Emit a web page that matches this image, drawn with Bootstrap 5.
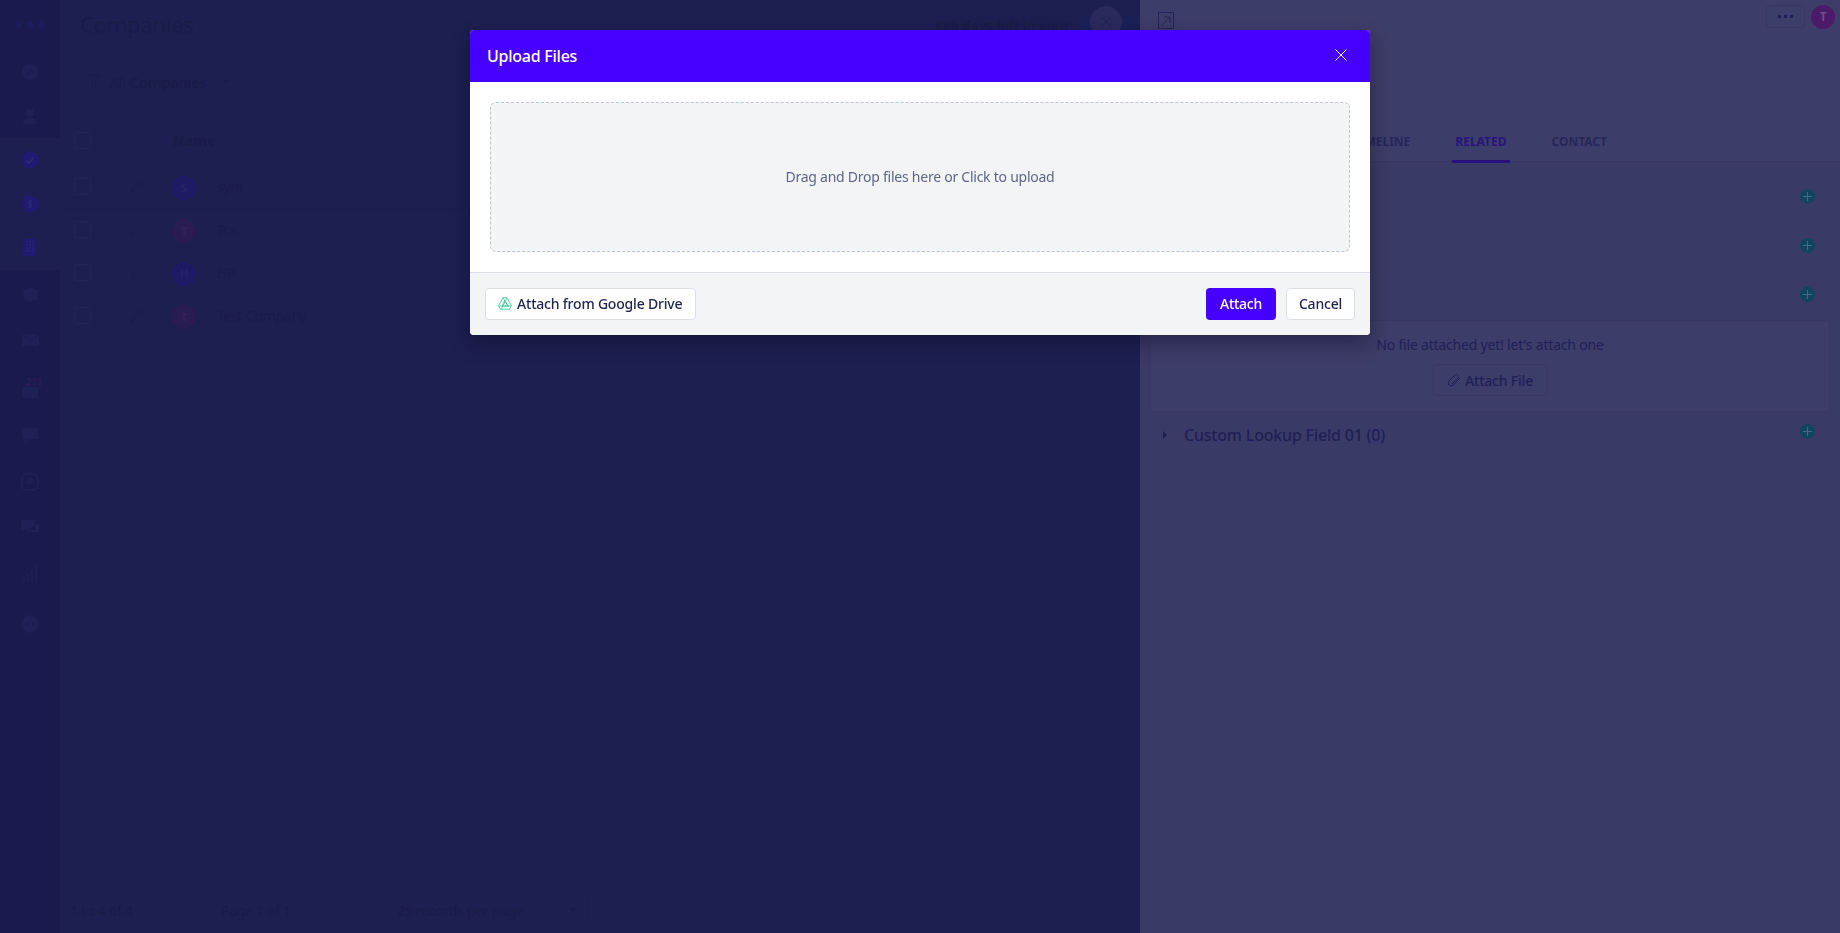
<!DOCTYPE html>
<html lang="en">
<head>
<meta charset="UTF-8">
<title>Upload Files</title>
<link href="https://cdn.jsdelivr.net/npm/bootstrap@5.3.0/dist/css/bootstrap.min.css" rel="stylesheet">
<style>
    body { font-family: "Noto Sans", sans-serif; background: #1d1f50; overflow: hidden; font-size: 14px; letter-spacing: -.25px; }
    svg { display: block; }

    /* page behind the modal, already dimmed */
    .app-wrap { height: 933px; }
    .side-bar { width: 60px; background: #1a1a4e; color: #1f2055; }
    .side-item { height: 44px; }
    .side-h48 { height: 48px; }
    .side-h50 { height: 50px; }
    .side-h46 { height: 46px; }
    .side-h47 { height: 47px; }
    .side-active { background: #1d1f50; color: #201a70; }
    .side-count { font-size: 10px; line-height: 10px; color: #2a1c58; font-weight: 700; letter-spacing: 0; margin-left: 8px; }
    .logo-dots { height: 50px; color: #1b1d5c; }
    .main-col { width: 1080px; color: #191b48; }
    .page-title { height: 50px; padding: 0 5px 1px 20px; font-size: 22px; color: #191b48; }
    .filter-row { height: 68px; padding: 0 0 4px 27px; font-size: 15px; font-weight: 500; letter-spacing: -.35px; }
    .caret-down { width: 0; height: 0; border-left: 4px solid transparent; border-right: 4px solid transparent; border-top: 4px solid currentColor; }
    .caret-right { width: 0; height: 0; border-top: 4px solid transparent; border-bottom: 4px solid transparent; border-left: 4px solid currentColor; }
    .co-table { width: 100%; }
    .co-table th { height: 47px; padding-bottom: 3px; font-weight: 700; letter-spacing: .3px; }
    .co-table td { height: 43px; padding-bottom: 1px; }
    .co-table .first-row td { border-bottom: 1px solid #1b1d4e; }
    .chk-box { width: 17px; height: 17px; margin-left: 13px; border: 1px solid #222356; border-radius: 2px; }
    .col-check { width: 92px; }
    .col-edit { width: 20px; }
    .pen-icon { margin-left: -22px; }
    .avatar-dot { width: 24px; height: 24px; border-radius: 50%; font-size: 11px; font-weight: 700; color: #262568; margin: 3px 21px 0 -1px; }
    .av-blue { background: #1e1a64; }
    .av-red { background: #291c50; color: #33235a; }
    .pager-bar { height: 46px; padding-left: 10px; font-size: 14px; }
    .pager-bar .sep { height: 30px; border-left: 1px solid #1b1d4d; }
    .pager-stroke { stroke: #1b1d4c; fill: none; }
    .gap-page { margin-left: 24px; }
    .gap-records { margin-left: 10px; }
    .gap-caret { margin-left: 45px; }
    .gap-sep { margin-left: 10px; }
    .gap-first-sep { margin-left: 39px; }
    .trial-note { font-size: 14px; font-weight: 600; color: #1a1b48; letter-spacing: -.1px; margin-bottom: -1px; }
    .trial-btn { width: 55px; height: 19px; margin-left: 10px; margin-top: 4px; background: #1a2158; }
    .trial-close { position: absolute; top: -11px; left: 10px; width: 32px; height: 32px; border-radius: 50%; background: #2a2b5c; color: #1e1f56; }

    /* drawer */
    .side-drawer { position: fixed; top: 0; right: 0; bottom: 0; width: 700px; background: #3d3d69; color: #1f1f55; }
    .drawer-top { height: 118px; padding: 5px 5px 0 18px; }
    .ext-icon { margin-top: 7px; stroke: #24245a; fill: none; }
    .more-btn { width: 39px; height: 23px; border: 1px solid #38385f; border-radius: 4px; color: #1f1f55; margin-right: 6px; }
    .user-dot { width: 24px; height: 24px; border-radius: 50%; background: #4b1a68; color: #6d4d8a; font-size: 12px; font-weight: 700; }
    .drawer-tabs { height: 44px; padding-right: 230px; gap: 39px; border-bottom: 1px solid #37375f; font-size: 12px; font-weight: 700; letter-spacing: 0; }
    .drawer-tabs a { color: #26265a; padding: 0 3px; line-height: 47px; height: 45px; text-decoration: none; }
    .drawer-tabs a.on { color: #28147f; border-bottom: 3px solid #28107f; }
    .drawer-body { background: #3a3a66; height: 771px; padding-top: 10px; }
    .rel-row { height: 49px; padding: 0 25px 0 23px; }
    .plus-dot { width: 15px; height: 15px; border-radius: 50%; background: #12445f; color: #3b6f86; }
    .plus-up { margin-top: -6px; }
    .file-card { margin: 1px 10px 0; height: 92px; background: #3d3d69; border: 1px solid #383863; border-radius: 4px; letter-spacing: -.2px; }
    .file-msg { margin-top: 13px; }
    .file-btn { height: 32px; width: 115px; margin-top: 9px; border: 1px solid #383863; border-radius: 4px; color: #1f1f55; font-weight: 500; }
    .lookup-row { margin-top: -2px; }
    .lookup-title { font-size: 16px; font-weight: 500; margin-left: 17px; letter-spacing: -.2px; }

    /* modal */
    .modal.upload-modal { display: block; }
    .upload-modal .modal-dialog { max-width: 900px; margin: 30px auto 0; }
    .upload-modal .modal-content { border: 0; border-radius: 4px; box-shadow: 0 8px 20px rgba(10, 10, 40, .45); overflow: hidden; }
    .upload-modal .modal-header { height: 52px; padding: 0 17px; background: #4600ff; border: 0; border-radius: 0; color: #fff; }
    .upload-modal .modal-title { font-size: 16px; font-weight: 500; margin-top: -1px; }
    .close-x { background: none; border: 0; padding: 0; color: #fff; margin: -3px 6px 0 0; }
    .upload-modal .modal-body { padding: 20px; }
    .drop-area { height: 150px; padding-bottom: 2px; background: #f3f4f6; border: 1px dashed #c0c4d0; border-radius: 6px; color: #5f6585; }
    .upload-modal .modal-footer { height: 63px; padding: 0 15px; background: #f3f4f6; border-top: 1px solid #dcdfe6; border-radius: 0; }
    .upload-modal .modal-footer > * { margin: 0; }
    .footer-btns { column-gap: 10px; }
    .btn-ghost, .btn-ghost:hover { height: 32px; padding: 0 0 2px; background: #fff; border: 1px solid #dcdfe6; border-radius: 4px; color: #1e2350; font-size: 14px; font-weight: 500; letter-spacing: -.2px; }
    .btn-drive { width: 211px; padding-left: 12px; column-gap: 5px; }
    .btn-cancel { width: 69px; }
    .btn-attach, .btn-attach:hover { height: 32px; width: 70px; padding: 0 0 2px; background: #4600ff; border: 0; border-radius: 4px; color: #fff; font-size: 14px; font-weight: 500; letter-spacing: -.25px; }
</style>
</head>
<body>

<div class="app-wrap d-flex">
    <div class="side-bar flex-shrink-0">
        <div class="logo-dots d-flex align-items-center justify-content-center"><svg width="30" height="8"><g fill="currentColor"><circle cx="4" cy="4" r="3"/><circle cx="15" cy="4" r="3"/><circle cx="26" cy="4" r="3"/></g></svg></div>
        <div class="side-item d-flex align-items-center justify-content-center"><svg width="18" height="18" viewBox="0 0 18 18"><circle cx="9" cy="9" r="8" fill="currentColor"/><path d="M6 12l5-6" stroke="#1a1a4e" stroke-width="1.500"/></svg></div>
        <div class="side-item d-flex align-items-center justify-content-center"><svg width="16" height="16" viewBox="0 0 16 16" fill="currentColor"><circle cx="8" cy="5" r="4"/><path d="M1 16c0-4 3-6 7-6s7 2 7 6z"/></svg></div>
        <div class="side-active">
            <div class="side-item d-flex align-items-center justify-content-center"><svg width="18" height="18" viewBox="0 0 18 18"><circle cx="9" cy="9" r="8.500" fill="currentColor"/><path d="M5 9.500l3 2.500 5-6" fill="none" stroke="#2b2a78" stroke-width="1.800"/></svg></div>
            <div class="side-item d-flex align-items-center justify-content-center"><svg width="18" height="18" viewBox="0 0 18 18"><circle cx="9" cy="9" r="8.500" fill="currentColor"/><path d="M11 6.500c-1-1-4-1-4 .8s4 1.300 4 3.200-3 1.800-4 .8M9 4.500v9" fill="none" stroke="#2b2a78" stroke-width="1"/></svg></div>
            <div class="side-item d-flex align-items-center justify-content-center"><svg width="14" height="18" viewBox="0 0 14 18"><rect width="13" height="17" rx="1" fill="currentColor"/><path d="M3 3h2M6 3h2M9 3h2M3 6h2M6 6h2M9 6h2M3 9h2M6 9h2M9 9h2M3 12h2M6 12h2M9 12h2" stroke="#2b2a78"/></svg></div>
        </div>
        <div class="side-h48 d-flex align-items-center justify-content-center"><svg width="17" height="17" viewBox="0 0 17 17"><path d="M8.500 1l7 3v9l-7 3-7-3V4z" fill="currentColor"/></svg></div>
        <div class="side-item d-flex align-items-center justify-content-center"><svg width="17" height="12" viewBox="0 0 17 12"><rect width="17" height="12" rx="1" fill="currentColor"/><path d="M1 1l7.500 6L16 1" fill="none" stroke="#1a1a4e"/></svg></div>
        <div class="side-h50 d-flex flex-column align-items-center justify-content-center">
            <span class="side-count">211</span>
            <svg width="16" height="11" viewBox="0 0 16 11"><rect width="16" height="11" rx="1" fill="currentColor"/></svg>
        </div>
        <div class="side-h46 d-flex align-items-center justify-content-center"><svg width="18" height="16" viewBox="0 0 18 16"><path d="M1 1h16v11H8l-4 4v-4H1z" fill="currentColor"/></svg></div>
        <div class="side-h47 d-flex align-items-center justify-content-center"><svg width="18" height="18" viewBox="0 0 18 18"><rect x="1" y="1" width="16" height="16" rx="5" fill="none" stroke="currentColor" stroke-width="2"/><circle cx="9" cy="8" r="3" fill="currentColor"/></svg></div>
        <div class="side-item d-flex align-items-center justify-content-center"><svg width="20" height="16" viewBox="0 0 20 16"><path d="M1 1h14v10H1zM6 13h13V5h-2" fill="currentColor"/></svg></div>
        <div class="side-h50 d-flex align-items-center justify-content-center"><svg width="16" height="16" viewBox="0 0 16 16"><path d="M2 16v-5M6 16V8M10 16V4M14 16V0" stroke="currentColor" stroke-width="1.500"/></svg></div>
        <div class="side-h50 d-flex align-items-center justify-content-center"><svg width="18" height="18" viewBox="0 0 18 18"><circle cx="9" cy="9" r="9" fill="currentColor"/><g fill="#1a1a4e"><circle cx="6" cy="9" r="1"/><circle cx="12" cy="9" r="1"/></g></svg></div>
    </div>

    <div class="main-col flex-shrink-0 d-flex flex-column">
        <div class="page-title d-flex align-items-center justify-content-between">
            <span>Companies</span>
            <div class="d-flex align-items-center">
                <span class="trial-note">889 days left in your</span>
                <div class="trial-btn position-relative">
                    <div class="trial-close d-flex align-items-center justify-content-center"><svg width="12" height="12" viewBox="0 0 12 12"><path d="M1 1l10 10M11 1L1 11" stroke="currentColor"/></svg></div>
                </div>
            </div>
        </div>
        <div class="filter-row d-flex align-items-center gap-2">
            <svg width="14" height="16" viewBox="0 0 14 16"><path d="M1 1h12L8.500 7v8l-3-2V7z" fill="none" stroke="currentColor"/></svg>
            <span>All Companies</span>
            <span class="caret-down ms-2"></span>
        </div>
        <table class="co-table">
            <thead>
                <tr><th class="col-check"><div class="chk-box"></div></th><th class="col-edit"></th><th>Name</th></tr>
            </thead>
            <tbody>
                <tr class="first-row">
                    <td><div class="chk-box"></div></td>
                    <td class="px-0"><svg class="pen-icon" width="15" height="15" viewBox="0 0 15 15"><path d="M1 14l1-4 8-9 3 3-9 8z" fill="none" stroke="currentColor"/></svg></td>
                    <td><div class="d-flex align-items-center"><span class="avatar-dot av-blue d-flex align-items-center justify-content-center">S</span>synt</div></td>
                </tr>
                <tr>
                    <td><div class="chk-box"></div></td>
                    <td class="px-0"><svg class="pen-icon" width="15" height="15" viewBox="0 0 15 15"><path d="M1 14l1-4 8-9 3 3-9 8z" fill="none" stroke="currentColor"/></svg></td>
                    <td><div class="d-flex align-items-center"><span class="avatar-dot av-red d-flex align-items-center justify-content-center">T</span>Tcs</div></td>
                </tr>
                <tr>
                    <td><div class="chk-box"></div></td>
                    <td class="px-0"><svg class="pen-icon" width="15" height="15" viewBox="0 0 15 15"><path d="M1 14l1-4 8-9 3 3-9 8z" fill="none" stroke="currentColor"/></svg></td>
                    <td><div class="d-flex align-items-center"><span class="avatar-dot av-blue d-flex align-items-center justify-content-center">H</span>HP</div></td>
                </tr>
                <tr>
                    <td><div class="chk-box"></div></td>
                    <td class="px-0"><svg class="pen-icon" width="15" height="15" viewBox="0 0 15 15"><path d="M1 14l1-4 8-9 3 3-9 8z" fill="none" stroke="currentColor"/></svg></td>
                    <td><div class="d-flex align-items-center"><span class="avatar-dot av-red d-flex align-items-center justify-content-center">T</span>Test Company</div></td>
                </tr>
            </tbody>
        </table>
        <div class="pager-bar mt-auto d-flex align-items-center">
            <span>1 to 4 of 4</span>
            <svg class="ms-4 pager-stroke" width="8" height="12" viewBox="0 0 8 12"><path d="M7 1L2 6l5 5"/></svg>
            <svg class="ms-4 pager-stroke" width="8" height="12" viewBox="0 0 8 12"><path d="M1 1l5 5-5 5"/></svg>
            <span class="gap-page">Page 1 of 1</span>
            <svg class="ms-3 pager-stroke" width="8" height="12" viewBox="0 0 8 12"><path d="M1 1l5 5-5 5"/></svg>
            <svg class="ms-4 pager-stroke" width="8" height="12" viewBox="0 0 8 12"><path d="M1 1l5 5-5 5"/></svg>
            <div class="sep gap-first-sep"></div>
            <span class="gap-records">25 records per page</span>
            <span class="caret-down gap-caret"></span>
            <div class="sep gap-sep"></div>
        </div>
    </div>
</div>

<div class="side-drawer">
    <div class="drawer-top d-flex justify-content-between align-items-start">
        <svg class="ext-icon" width="16" height="17" viewBox="0 0 16 17"><path d="M.5.500h15v16H.5zM4 13l8-8M6 5h6v6"/></svg>
        <div class="d-flex">
            <div class="more-btn d-flex align-items-center justify-content-center"><svg width="15" height="3"><g fill="currentColor"><rect width="3" height="3"/><rect x="6" width="3" height="3"/><rect x="12" width="3" height="3"/></g></svg></div>
            <div class="user-dot d-flex align-items-center justify-content-center">T</div>
        </div>
    </div>
    <div class="drawer-tabs d-flex justify-content-end">
        <a href="#">TIMELINE</a>
        <a href="#" class="on">RELATED</a>
        <a href="#">CONTACT</a>
    </div>
    <div class="drawer-body">
        <div class="rel-row d-flex align-items-center justify-content-end"><div class="plus-dot d-flex align-items-center justify-content-center"><svg width="9" height="9"><path d="M4.500 0v9M0 4.500h9" stroke="currentColor"/></svg></div></div>
        <div class="rel-row d-flex align-items-center justify-content-end"><div class="plus-dot d-flex align-items-center justify-content-center"><svg width="9" height="9"><path d="M4.500 0v9M0 4.500h9" stroke="currentColor"/></svg></div></div>
        <div class="rel-row d-flex align-items-center justify-content-end"><div class="plus-dot d-flex align-items-center justify-content-center"><svg width="9" height="9"><path d="M4.500 0v9M0 4.500h9" stroke="currentColor"/></svg></div></div>
        <div class="file-card d-flex flex-column align-items-center">
            <div class="file-msg">No file attached yet! let's attach one</div>
            <div class="file-btn d-flex align-items-center justify-content-center gap-1">
                <svg width="14" height="14" viewBox="0 0 14 14"><path d="M13 5L6 12c-1 1-3 1-4 0s-1-3 0-4l6-6c1-1 2-1 3 0s1 2 0 3L5 11" fill="none" stroke="currentColor"/></svg>
                <span>Attach File</span>
            </div>
        </div>
        <div class="rel-row lookup-row d-flex align-items-center justify-content-between">
            <div class="d-flex align-items-center"><span class="caret-right"></span><span class="lookup-title">Custom Lookup Field 01 (0)</span></div>
            <div class="plus-dot plus-up d-flex align-items-center justify-content-center"><svg width="9" height="9"><path d="M4.500 0v9M0 4.500h9" stroke="currentColor"/></svg></div>
        </div>
    </div>
</div>

<div class="modal upload-modal" tabindex="-1">
    <div class="modal-dialog">
        <div class="modal-content">
            <div class="modal-header d-flex align-items-center justify-content-between">
                <h5 class="modal-title">Upload Files</h5>
                <button type="button" class="close-x" aria-label="Close"><svg width="12" height="12" viewBox="0 0 12 12"><path d="M.5.500l11 11M11.500.500l-11 11" stroke="currentColor" stroke-width="1"/></svg></button>
            </div>
            <div class="modal-body">
                <div class="drop-area d-flex align-items-center justify-content-center">Drag and Drop files here or Click to upload</div>
            </div>
            <div class="modal-footer d-flex align-items-center justify-content-between">
                <button type="button" class="btn btn-ghost btn-drive d-flex align-items-center">
                    <svg width="14" height="13" viewBox="0 0 14 13"><path d="M5 .8h4l4.500 8-2 3.400H2.500l-2-3.400zM7 3.500L4 9h6zM.8 9h12.400M5 .8l5.500 9M9 .8l-5.500 11" fill="none" stroke="#45c99a" stroke-width=".9"/></svg>
                    <span>Attach from Google Drive</span>
                </button>
                <div class="footer-btns d-flex">
                    <button type="button" class="btn btn-attach">Attach</button>
                    <button type="button" class="btn btn-ghost btn-cancel">Cancel</button>
                </div>
            </div>
        </div>
    </div>
</div>

<script src="https://cdn.jsdelivr.net/npm/bootstrap@5.3.0/dist/js/bootstrap.bundle.min.js"></script>
</body>
</html>
